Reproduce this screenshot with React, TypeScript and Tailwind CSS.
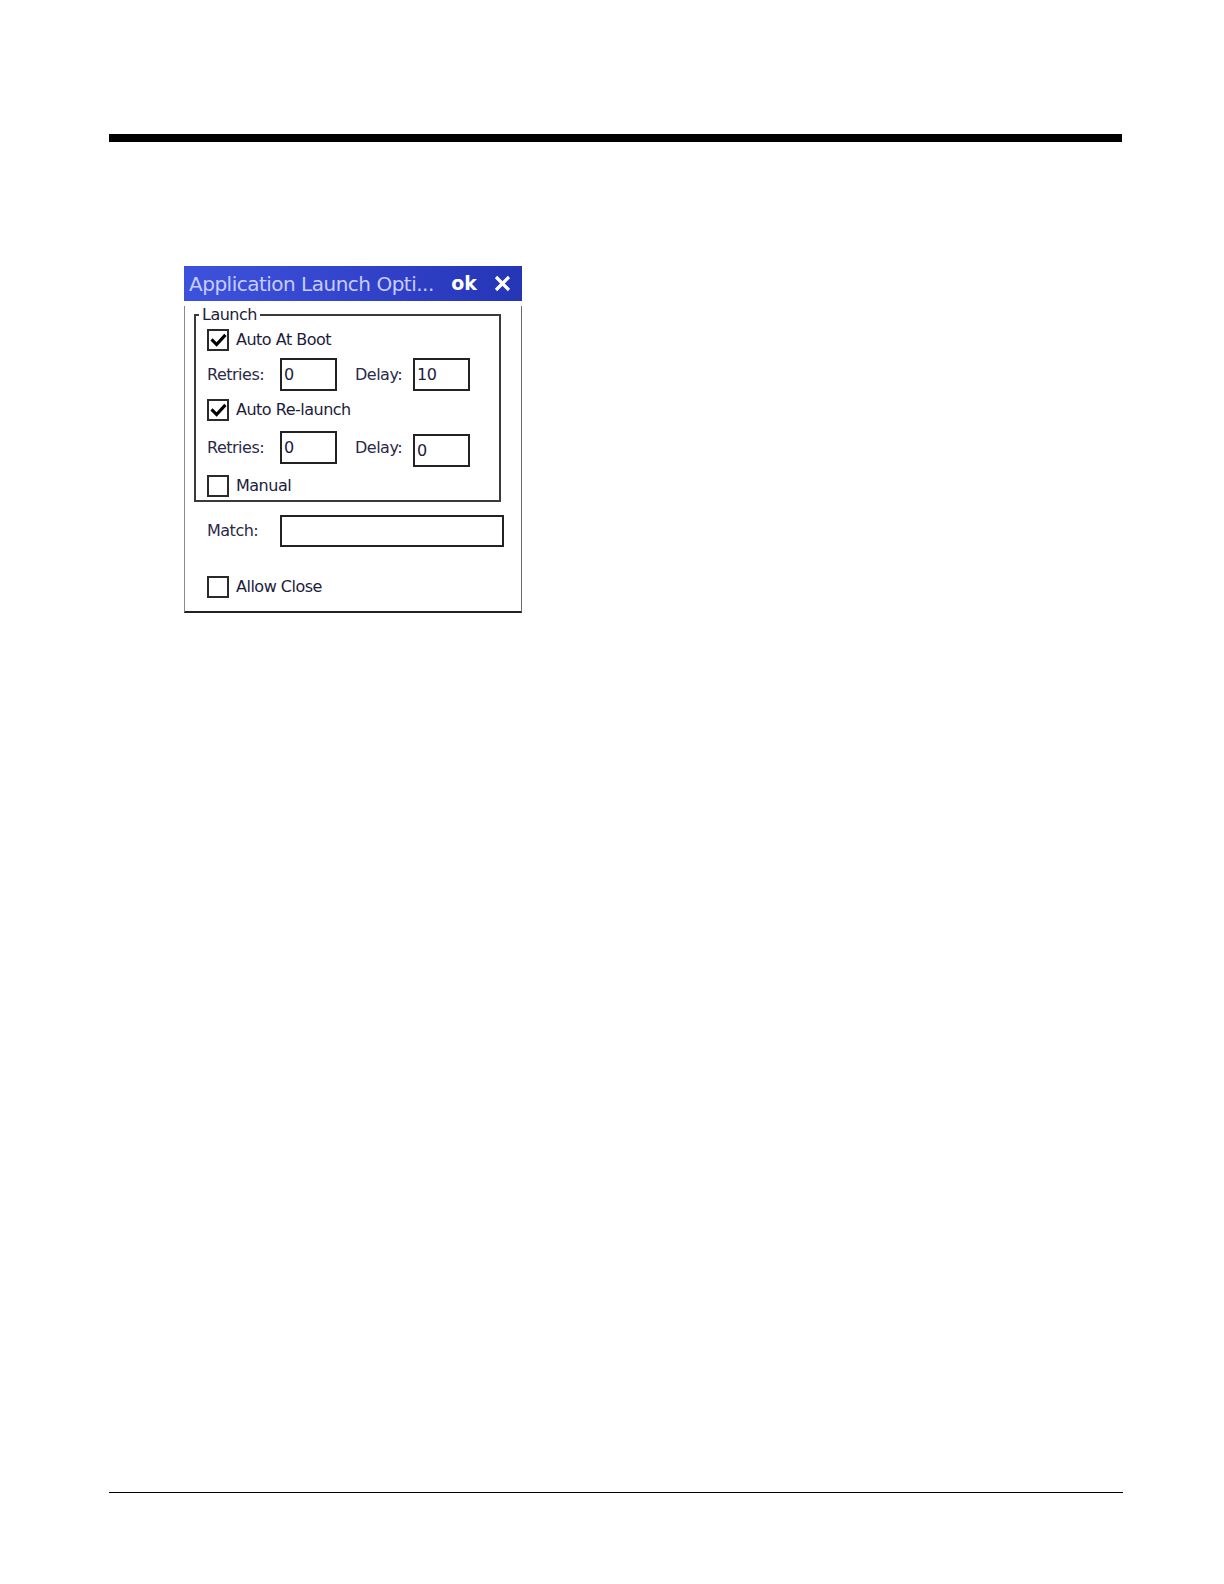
import React from "react";

const ui = { fontFamily: '"DejaVu Sans", Verdana, sans-serif' };

const CheckBox: React.FC<{ checked?: boolean; label: string }> = ({ checked, label }) => (
  <div className="flex items-center h-[22px]">
    <div className="w-[22px] h-[22px] border-[2px] border-[#2a2a2a] bg-white flex items-center justify-center">
      {checked && (
        <svg width="17" height="17" viewBox="0 0 16 16">
          <path d="M2.5 8 L6.2 11.8 L13.5 3.8" fill="none" stroke="#000" strokeWidth="3" strokeLinecap="square" />
        </svg>
      )}
    </div>
    <span className="ml-[7px] text-[16px] tracking-[-0.5px] text-[#1c1c3c] leading-none">{label}</span>
  </div>
);

const TextBox: React.FC<{ value?: string; className?: string }> = ({ value = "", className = "" }) => (
  <div
    className={`border-[2px] border-[#222] bg-white flex items-center pl-[2px] text-[16px] tracking-[-0.5px] text-[#1c1c3c] leading-none ${className}`}
  >
    {value}
  </div>
);

const RetryRow: React.FC<{ retries: string; delay: string; shiftDelay?: boolean }> = ({ retries, delay, shiftDelay }) => (
  <div className="flex items-start text-[16px] tracking-[-0.5px] text-[#2a2a48]">
    <span className="w-[73px] h-[33px] flex items-center">Retries:</span>
    <TextBox value={retries} className="w-[57px] h-[33px]" />
    <span className="ml-[18px] w-[58px] h-[33px] flex items-center">Delay:</span>
    <TextBox value={delay} className={shiftDelay ? "w-[57px] h-[33px] mt-[3px]" : "w-[57px] h-[33px]"} />
  </div>
);

const LaunchDialog: React.FC = () => (
  <div className="ml-[184px] mt-[124px] w-[338px]" style={ui}>
    <div className="h-[35px] flex items-center pl-[5px] pr-[11px] bg-gradient-to-r from-[#3d52dc] via-[#3344cc] to-[#2435b6]">
      <span className="text-[20px] tracking-[-0.5px] text-[#c7cdff] leading-none whitespace-nowrap">
        Application Launch Opti...
      </span>
      <span className="ml-auto text-[19px] font-bold text-white leading-none">ok</span>
      <svg className="ml-[17px]" width="17" height="17" viewBox="0 0 17 17">
        <path d="M2 2 L15 15 M15 2 L2 15" stroke="#fff" strokeWidth="3.2" />
      </svg>
    </div>
    <div className="border-l border-l-[#8a8a8a] border-r border-r-[#6a6a6a] border-b-[2px] border-b-[#222] pb-[13px]">
      <fieldset className="ml-[9px] mt-[5px] w-[307px] border-[2px] border-[#3a3a3a] pb-[3px]">
        <legend className="ml-[3px] px-[3px] text-[16px] tracking-[-0.5px] leading-[18px] text-[#1c1c3c]">
          Launch
        </legend>
        <div className="flex flex-col pl-[11px] pt-[5px]">
          <CheckBox checked label="Auto At Boot" />
          <div className="mt-[7px]">
            <RetryRow retries="0" delay="10" />
          </div>
          <div className="mt-[8px]">
            <CheckBox checked label="Auto Re-launch" />
          </div>
          <div className="mt-[10px]">
            <RetryRow retries="0" delay="0" shiftDelay />
          </div>
          <div className="mt-[8px]">
            <CheckBox label="Manual" />
          </div>
        </div>
      </fieldset>
      <div className="mt-[13px] pl-[22px] flex items-center text-[16px] tracking-[-0.5px] text-[#2a2a48]">
        <span className="w-[73px]">Match:</span>
        <TextBox className="w-[224px] h-[32px]" />
      </div>
      <div className="mt-[29px] pl-[22px]">
        <CheckBox label="Allow Close" />
      </div>
    </div>
  </div>
);

export default function App() {
  return (
    <div className="w-[1224px] h-[1584px] bg-white pt-[134px]">
      <div className="ml-[109px] w-[1013px] h-[8px] bg-black" />
      <LaunchDialog />
      <div className="ml-[109px] mt-[879px] w-[1014px] h-px bg-black" />
    </div>
  );
}
